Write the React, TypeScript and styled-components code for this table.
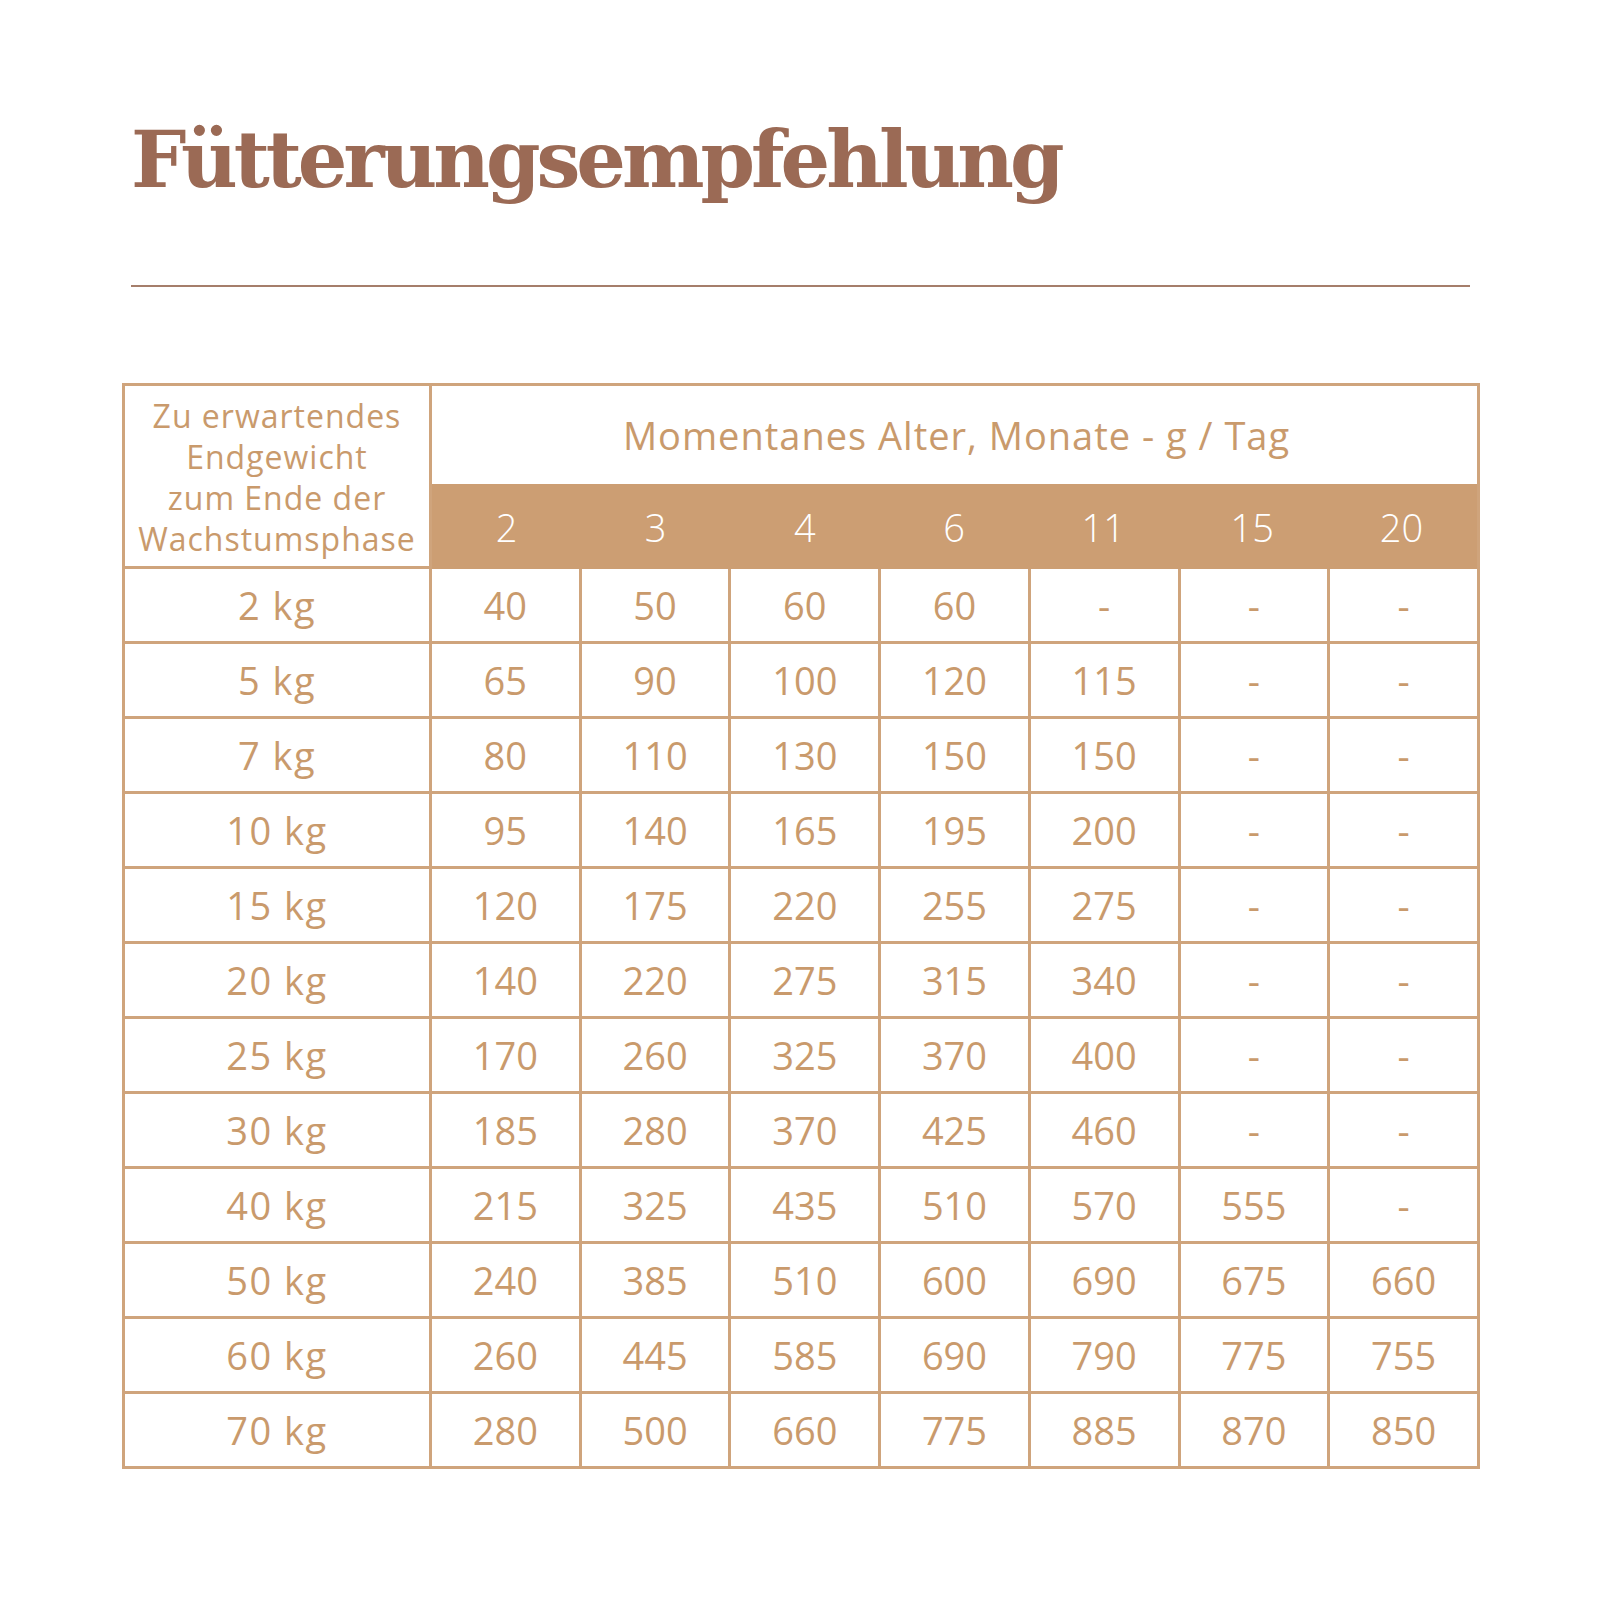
import React from "react";
import styled, { createGlobalStyle } from "styled-components";

const GlobalStyle = createGlobalStyle`
  html, body { margin: 0; padding: 0; background: #ffffff; }
  body { width: 1600px; min-height: 1600px; }
`;

const BORDER = "#cfa47c";
const TEXT = "#c99a6c";
const BAND = "#cc9e73";

const Page = styled.div`
  width: 1600px;
  height: 1600px;
  box-sizing: border-box;
  padding: 0 0 0 122px;
  background: #fff;
  display: flex;
  flex-direction: column;
`;

const TitleBlock = styled.div`
  padding: 112px 0 0 9px;
  width: 1340px;
`;

const Title = styled.h1`
  margin: 0;
  font-family: "DejaVu Serif", "Liberation Serif", serif;
  font-weight: 700;
  font-size: 78px;
  line-height: 96px;
  letter-spacing: -4px;
  color: #9b6a55;
`;

const Rule = styled.div`
  margin: 77px 0 0 9px;
  height: 2px;
  background: #a57e6b;
  width: 1339px;
`;

const Table = styled.div`
  margin-top: 96px;
  width: 1358px;
  box-sizing: border-box;
  border: 3px solid ${BORDER};
  background: ${BORDER};
  display: grid;
  grid-template-columns: 304px repeat(7, 1fr);
  grid-auto-rows: 72px;
  grid-template-rows: 180px;
  gap: 3px;
  font-family: "Open Sans", Lato, sans-serif;
  color: ${TEXT};
`;

const Cell = styled.div<{ $label?: boolean }>`
  background: #fff;
  display: flex;
  align-items: center;
  justify-content: center;
  font-size: 38px;
  font-weight: 400;
  letter-spacing: ${(p) => (p.$label ? "1.5px" : "0")};
`;

const CornerCell = styled.div`
  background: #fff;
  display: flex;
  align-items: center;
  justify-content: center;
  text-align: center;
  font-size: 32px;
  line-height: 41px;
  letter-spacing: 1px;
  padding-top: 2px;
`;

const AgeHeader = styled.div`
  grid-column: 2 / span 7;
  display: flex;
  flex-direction: column;
  background: #fff;
`;

const AgeTitle = styled.div`
  height: 98px;
  display: flex;
  align-items: center;
  justify-content: center;
  font-size: 38px;
  letter-spacing: 1px;
  padding-left: 4px;
`;

const AgeBand = styled.div`
  flex: 1;
  background: ${BAND};
  display: grid;
  grid-template-columns: repeat(7, 1fr);
  margin: 0 0 -3px;
  padding-right: 1px;
`;

const AgeValue = styled.div`
  display: flex;
  align-items: center;
  justify-content: center;
  color: #fff;
  font-size: 38px;
  font-weight: 300;
`;

const ages = ["2", "3", "4", "6", "11", "15", "20"];

const rows: [string, string[]][] = [
  ["2 kg", ["40", "50", "60", "60", "-", "-", "-"]],
  ["5 kg", ["65", "90", "100", "120", "115", "-", "-"]],
  ["7 kg", ["80", "110", "130", "150", "150", "-", "-"]],
  ["10 kg", ["95", "140", "165", "195", "200", "-", "-"]],
  ["15 kg", ["120", "175", "220", "255", "275", "-", "-"]],
  ["20 kg", ["140", "220", "275", "315", "340", "-", "-"]],
  ["25 kg", ["170", "260", "325", "370", "400", "-", "-"]],
  ["30 kg", ["185", "280", "370", "425", "460", "-", "-"]],
  ["40 kg", ["215", "325", "435", "510", "570", "555", "-"]],
  ["50 kg", ["240", "385", "510", "600", "690", "675", "660"]],
  ["60 kg", ["260", "445", "585", "690", "790", "775", "755"]],
  ["70 kg", ["280", "500", "660", "775", "885", "870", "850"]],
];

export default function App() {
  return (
    <>
      <GlobalStyle />
      <Page>
        <TitleBlock>
          <Title>Fütterungsempfehlung</Title>
        </TitleBlock>
        <Rule />
        <Table>
          <CornerCell>
            Zu erwartendes
            <br />
            Endgewicht
            <br />
            zum Ende der
            <br />
            Wachstumsphase
          </CornerCell>
          <AgeHeader>
            <AgeTitle>Momentanes Alter, Monate - g / Tag</AgeTitle>
            <AgeBand>
              {ages.map((a) => (
                <AgeValue key={a}>{a}</AgeValue>
              ))}
            </AgeBand>
          </AgeHeader>
          {rows.map(([w, vals]) => (
            <React.Fragment key={w}>
              <Cell $label>{w}</Cell>
              {vals.map((v, i) => (
                <Cell key={i}>{v}</Cell>
              ))}
            </React.Fragment>
          ))}
        </Table>
      </Page>
    </>
  );
}
